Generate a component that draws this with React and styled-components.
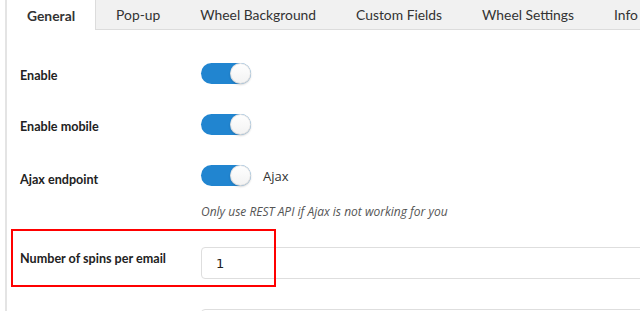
import React from 'react';
import styled, { createGlobalStyle } from 'styled-components';

const GlobalStyle = createGlobalStyle`
  html, body {
    margin: 0;
    padding: 0;
    background: #fff;
    overflow: hidden;
  }
`;

// Обёртка страницы
const Page = styled.div`
  width: 1000px;
  min-height: 311px;
  margin-left: 5px;
  border-left: 2px solid #e4e4e4;
  font-family: Lato, "Liberation Sans", sans-serif;
  color: #222;
`;

const TabBar = styled.div`
  display: flex;
  height: 29px;
  background: #f1f1f1;
  border-bottom: 1px solid #dcdcdc;
`;

const Tab = styled.div`
  display: flex;
  align-items: center;
  height: ${(p) => (p.$active ? '30px' : '29px')};
  padding: 0 20px;
  box-sizing: border-box;
  font-size: 13.85px;
  font-weight: ${(p) => (p.$active ? 700 : 400)};
  color: #333;
  background: ${(p) => (p.$active ? '#fff' : 'transparent')};
  border-right: ${(p) => (p.$active ? '1px solid #dcdcdc' : 'none')};
  white-space: nowrap;
`;

const Content = styled.div`
  padding: 18px 0 0 13px;
`;

const Row = styled.div`
  position: relative;
  display: grid;
  grid-template-columns: 181px 1fr;
  align-items: start;
  padding: ${(p) => p.$pad || '15px 0'};
`;

const Label = styled.div`
  margin-top: ${(p) => p.$shift || 0}px;
  font-size: 12.6px;
  font-weight: 700;
  color: #222;
  line-height: 17px;
`;

const Field = styled.div`
  display: flex;
  flex-direction: column;
`;

const Inline = styled.div`
  display: flex;
  align-items: center;
  gap: 12px;
`;

const Toggle = styled.span`
  position: relative;
  display: inline-block;
  width: 50px;
  height: 21px;
  border-radius: 11px;
  background: #2185d0;

  &::after {
    content: '';
    position: absolute;
    top: 0;
    right: 0;
    width: 21px;
    height: 21px;
    border-radius: 50%;
    box-sizing: border-box;
    background: linear-gradient(#fff, #f2f2f2);
    box-shadow: 0 1px 2px rgba(34, 36, 38, 0.2), inset 0 0 0 1px rgba(34, 36, 38, 0.12);
  }
`;

const ToggleText = styled.span`
  font-family: "Open Sans", "Liberation Sans", sans-serif;
  font-size: 13px;
  color: #333;
`;

const Help = styled.div`
  margin-top: 16px;
  font-family: "Open Sans", "Liberation Sans", sans-serif;
  font-style: italic;
  font-size: 12px;
  line-height: 20px;
  color: #555;
`;

const Input = styled.div`
  height: 32px;
  box-sizing: border-box;
  border: 1px solid #dedede;
  border-radius: 4px;
  padding-left: 14px;
  display: flex;
  align-items: center;
  font-family: "DejaVu Sans", sans-serif;
  font-size: 13px;
  color: #222;
`;

// Красная рамка-выделение поверх строки
const Highlight = styled.div`
  position: absolute;
  left: -9px;
  top: -3px;
  width: 265px;
  height: 58px;
  box-sizing: border-box;
  border: 2px solid #ff0000;
  pointer-events: none;
`;

const tabs = ['General', 'Pop-up', 'Wheel Background', 'Custom Fields', 'Wheel Settings', 'Info'];

function App() {
  return (
    <>
      <GlobalStyle />
      <Page>
        <TabBar>
          {tabs.map((t, i) => (
            <Tab key={t} $active={i === 0}>{t}</Tab>
          ))}
        </TabBar>
        <Content>
          <Row>
            <Label $shift={4}>Enable</Label>
            <Field><Toggle /></Field>
          </Row>
          <Row>
            <Label $shift={4}>Enable mobile</Label>
            <Field><Toggle /></Field>
          </Row>
          <Row $pad="15px 0 10px">
            <Label $shift={5.5}>Ajax endpoint</Label>
            <Field>
              <Inline>
                <Toggle />
                <ToggleText>Ajax</ToggleText>
              </Inline>
              <Help>Only use REST API if Ajax is not working for you</Help>
            </Field>
          </Row>
          <Row>
            <Highlight />
            <Label $shift={2.5}>Number of spins per email</Label>
            <Input>1</Input>
          </Row>
          <Row>
            <Label />
            <Input />
          </Row>
        </Content>
      </Page>
    </>
  );
}

export default App;
